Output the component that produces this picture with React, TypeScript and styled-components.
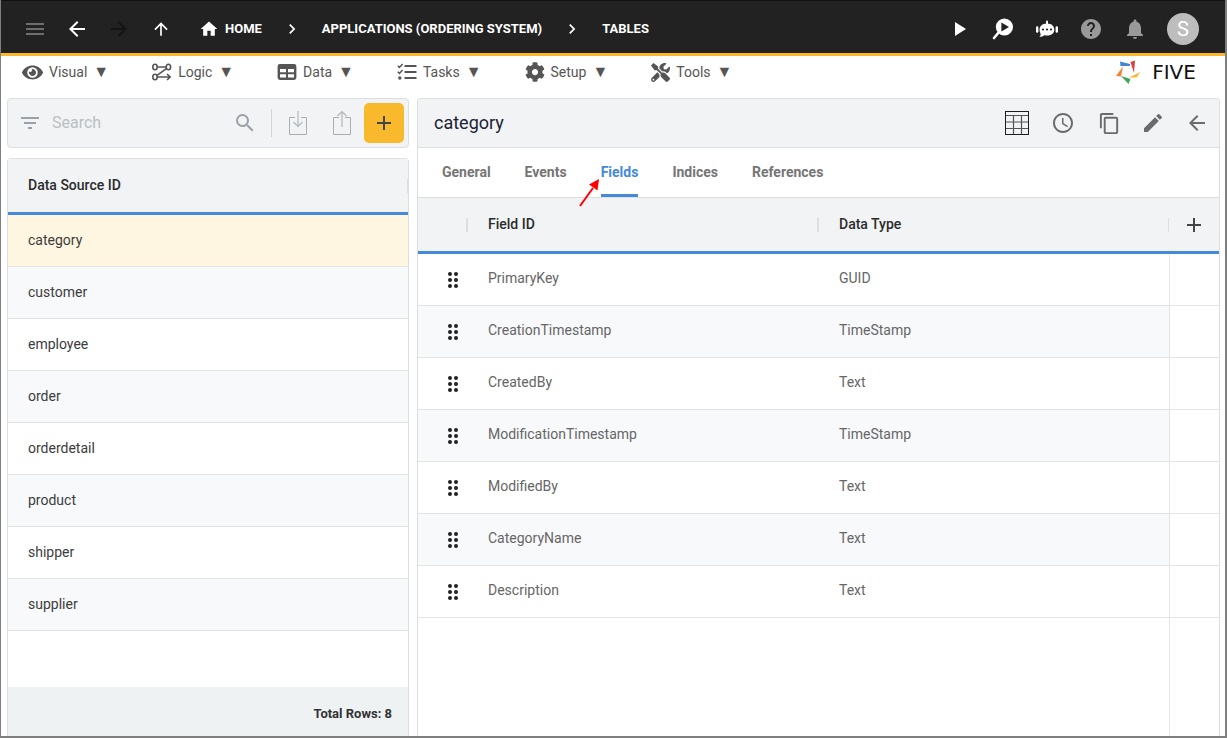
import React from "react";
import styled, { createGlobalStyle } from "styled-components";
import {
  MdMenu, MdArrowBack, MdArrowForward, MdArrowUpward, MdHome, MdChevronRight,
  MdPlayArrow, MdHelp, MdNotifications, MdFilterList, MdSearch,
  MdAdd, MdContentCopy, MdEdit, MdAccessTime,
} from "react-icons/md";
import { FaEye, FaTools, FaCog } from "react-icons/fa";

const GlobalStyle = createGlobalStyle`
  * { box-sizing: border-box; }
  body { margin: 0; background: #fff; font-family: Roboto, "Liberation Sans", sans-serif; font-size: 14px; color: #2b2b2b; }
  button { border: 0; padding: 0; background: none; font: inherit; color: inherit; }
`;

const Page = styled.div`
  display: flex;
  flex-direction: column;
  min-height: 100vh;
  border: solid #7f7f7f;
  border-width: 0 2px 2px 1px;
`;

const TopBar = styled.header`
  display: flex;
  align-items: center;
  height: 56px;
  padding: 3px 26px 0 22px;
  background: #222;
  border-top: 1px solid #111;
  border-bottom: 3px solid #fbb829;
  color: #fff;
`;

const IconButton = styled.button<{ $width?: number; $color?: string }>`
  display: flex;
  align-items: center;
  justify-content: center;
  flex: none;
  width: ${(p) => p.$width ?? 44}px;
  height: 40px;
  color: ${(p) => p.$color ?? "inherit"};
`;

const NavButtons = styled.div`
  display: flex;
  width: 176px;
  gap: 18px;
`;

const Crumbs = styled.nav`
  display: flex;
  align-items: center;
  flex: 1;
`;

const Crumb = styled.a`
  display: flex;
  align-items: center;
  gap: 6px;
  color: #fff;
  font-size: 13px;
  font-weight: 700;
  line-height: 20px;
  text-decoration: none;
  white-space: nowrap;
`;

const CrumbArrow = styled.span`
  display: flex;
  justify-content: center;
  width: 60px;
`;

const Actions = styled.div`
  display: flex;
  align-items: center;
`;

const Avatar = styled.button`
  width: 32px;
  height: 32px;
  margin-left: 10px;
  border-radius: 50%;
  background: #bdbdbd;
  color: #fff;
  font-size: 20px;
  line-height: 32px;
`;

const MenuBar = styled.nav`
  display: flex;
  align-items: center;
  gap: 43px;
  height: 42px;
  padding: 0 22px 10px 21px;
`;

const MenuButton = styled.button`
  display: flex;
  align-items: center;
  gap: 6px;
  color: #555;
  line-height: 20px;
`;

const Caret = styled.span`
  font-size: 16px;
`;

const Brand = styled.a`
  display: flex;
  align-items: center;
  gap: 4px;
  margin-left: auto;
  color: #111;
  font-family: "DejaVu Sans", sans-serif;
  font-size: 20px;
  line-height: 24px;
  text-decoration: none;
`;

const Wordmark = styled.span`
  min-width: 58px;
  text-align: center;
`;

const Main = styled.main`
  display: flex;
  flex: 1;
  gap: 8px;
  padding: 0 5px 0 6px;
`;

const ListColumn = styled.section`
  display: flex;
  flex-direction: column;
  flex: none;
  width: 402px;
  gap: 10px;
`;

const SearchBar = styled.form`
  display: flex;
  align-items: center;
  height: 50px;
  padding: 0 4px 0 10px;
  background: #f1f3f5;
  border: 1px solid #dcdee0;
  border-radius: 4px;
  color: #9aa1a8;
`;

const SearchInput = styled.input`
  flex: 1;
  min-width: 0;
  margin-left: 10px;
  padding: 0 0 2px;
  border: 0;
  outline: 0;
  background: none;
  font: inherit;
  font-size: 16px;
  &::placeholder { color: #bbbfc3; opacity: 1; }
`;

const Divider = styled.span`
  width: 1px;
  height: 28px;
  margin: 0 4px 0 6px;
  background: #d2d4d6;
`;

const AddButton = styled.button`
  display: flex;
  align-items: center;
  justify-content: center;
  width: 40px;
  height: 40px;
  border-radius: 5px;
  background: #f8b92c;
  color: #444;
`;

const Panel = styled.section`
  display: flex;
  flex-direction: column;
  flex: 1;
  min-width: 0;
  border: 1px solid #dcdee0;
  border-bottom: 0;
  border-radius: 4px 4px 0 0;
`;

const Table = styled.table`
  width: 100%;
  table-layout: fixed;
  border-collapse: separate;
  border-spacing: 0;
`;

const HeadCell = styled.th<{ $width?: number; $rule?: number }>`
  width: ${(p) => (p.$width ? `${p.$width}px` : "auto")};
  height: 56px;
  padding: 0 0 2px 20px;
  border-bottom: 3px solid #4589da;
  background: ${(p) =>
    p.$rule
      ? `linear-gradient(#dcdee0, #dcdee0) right center / ${p.$rule}px 14px no-repeat, #f1f3f5`
      : "#f1f3f5"};
  color: #2b2b2b;
  font-weight: 500;
  line-height: 20px;
  text-align: left;
`;

const Row = styled.tr<{ $selected?: boolean }>`
  background: ${(p) => (p.$selected ? "#fff6e2" : "#fff")};
  &:nth-child(even) { background: #f8f9fb; }
`;

const Cell = styled.td<{ $muted?: boolean }>`
  height: 52px;
  padding: 0 0 ${(p) => (p.$muted ? 4 : 2)}px 20px;
  border-bottom: 1px solid #e2e4e6;
  color: ${(p) => (p.$muted ? "#666" : "#3c3c3c")};
  line-height: 20px;
`;

const GripCell = styled(Cell)`
  padding: 0 0 0 30px;
  svg { display: block; }
`;

const EndCell = styled(Cell)`
  background: #fff;
  border-left: 1px solid #e2e4e6;
`;

const TailColumn = styled.div`
  flex: 1;
  margin-right: 49px;
  border-right: 1px solid #e2e4e6;
`;

const Footer = styled.footer`
  margin-top: auto;
  padding: 17px 16px 12px;
  background: #eef2f3;
  color: #333;
  font-size: 13px;
  font-weight: 700;
  line-height: 20px;
  text-align: right;
`;

const PanelHeader = styled.header`
  display: flex;
  align-items: center;
  height: 49px;
  padding-left: 16px;
  background: #f1f3f5;
  border-bottom: 1px solid #dcdee0;
  border-radius: 3px 3px 0 0;
  color: #6b6b6b;
`;

const Title = styled.h1`
  flex: 1;
  margin: 0;
  color: #1c2333;
  font-size: 18px;
  font-weight: 400;
  line-height: 24px;
`;

const Tabs = styled.div`
  display: flex;
  gap: 34px;
  height: 50px;
  padding-left: 24px;
  border-bottom: 1px solid #dcdee0;
`;

const Tab = styled.button<{ $active?: boolean }>`
  position: relative;
  padding-top: 1px;
  border-bottom: 3px solid ${(p) => (p.$active ? "#4589da" : "transparent")};
  color: ${(p) => (p.$active ? "#4589da" : "#757575")};
  font-weight: 700;
`;

const Pointer = styled.svg`
  position: absolute;
  top: 28px;
  left: -24px;
  z-index: 1;
`;

const PlusButton = styled.button`
  display: block;
  height: 24px;
  margin: 2px 0 0 -7px;
  color: #444;
`;

const LogicIcon = () => (
  <svg width="20" height="18" viewBox="0 0 20 18" fill="none" stroke="#555" strokeWidth="1.6">
    <ellipse cx="3" cy="4" rx="2.2" ry="2.8" />
    <ellipse cx="16.4" cy="4" rx="2.2" ry="2.8" />
    <ellipse cx="3" cy="14" rx="2.2" ry="2.8" />
    <path d="M5 4H14M14.4 5.6L5 12.4M5 14H18M15 11L18.2 14L15 17" />
  </svg>
);

const DataIcon = () => (
  <svg width="20" height="18" viewBox="0 0 20 18" fill="#555" fillRule="evenodd">
    <path d="M3 1H17A2.4 2.4 0 0 1 19.4 3.4V14.6A2.4 2.4 0 0 1 17 17H3A2.4 2.4 0 0 1 .6 14.6V3.4A2.4 2.4 0 0 1 3 1ZM3 6V9.2H9V6ZM11 6V9.2H17V6ZM3 11.2V14.6H9V11.2ZM11 11.2V14.6H17V11.2Z" />
  </svg>
);

const TasksIcon = () => (
  <svg width="20" height="18" viewBox="0 0 20 18" fill="none" stroke="#555">
    <path d="M7.500 3H19.500M7.500 9H19.500M7.500 15H19.500" strokeWidth="2" />
    <path d="M.8 2.800L2.400 4.400L5.600 1M.8 8.800L2.400 10.400L5.600 7" strokeWidth="1.500" />
    <circle cx="2.800" cy="15" r="1.700" fill="#555" stroke="none" />
  </svg>
);

const FindPlayIcon = () => (
  <svg width="22" height="22" viewBox="0 0 22 22">
    <path d="M7 14L2 20" stroke="#fff" strokeWidth="2.6" strokeLinecap="round" />
    <circle cx="12.4" cy="9" r="8.6" fill="#fff" />
    <path d="M9.400 4.600L17 9L9.400 13.400Z" fill="#222" />
  </svg>
);

const BotIcon = () => (
  <svg width="22" height="20" viewBox="0 0 22 20" fill="#fff">
    <rect x="10" y="1.500" width="2" height="4" rx="1" />
    <path d="M11 4.400C16 4.400 18.300 7.400 18.300 10.600C18.300 14 16 16.600 11 16.600C10 16.600 9 16.500 8.200 16.300C6.800 17.600 5 18 3.200 17.800C4.300 17 4.700 16 4.700 15C3.900 13.900 3.600 12.400 3.600 10.600C3.600 7.400 6 4.400 11 4.400Z" />
    <rect x="0" y="7.300" width="2.400" height="6.400" rx="1.200" />
    <rect x="19.600" y="7.300" width="2.400" height="6.400" rx="1.200" />
    <g fill="#222">
      <circle cx="7" cy="10.500" r="1.100" />
      <circle cx="11" cy="10.500" r="1.100" />
      <circle cx="15" cy="10.500" r="1.100" />
    </g>
  </svg>
);

const TransferIcon = ({ up }: { up?: boolean }) => (
  <svg width="20" height="26" viewBox="0 0 20 26" fill="none" stroke="#a9aeb3">
    <path d="M7 7.500H1.500V24.500H18.500V7.500H13" />
    <path d={up ? "M10 17V2M5.500 6L10 1.500L14.500 6" : "M10 1V16.500M5.500 12L10 16.500L14.500 12"} stroke="#b3b7bb" strokeWidth="1.200" />
  </svg>
);

const GridIcon = () => (
  <svg width="24" height="24" viewBox="0 0 24 24" fill="none">
    <path d="M1 4.500H23M8.500 4V23M16.500 4V23M1 11H23M1 17.500H23" stroke="#555" strokeWidth="1.200" />
    <rect x=".5" y=".5" width="23" height="23" stroke="#1c1c22" />
  </svg>
);

const GripIcon = () => (
  <svg width="12" height="18" viewBox="0 0 12 18" fill="#222">
    {[3, 9, 15].map((y) => (
      <React.Fragment key={y}>
        <circle cx="2" cy={y} r="2" />
        <circle cx="8" cy={y} r="2" />
      </React.Fragment>
    ))}
  </svg>
);

const BrandMark = () => (
  <svg width="25" height="24" viewBox="0 0 25 24">
    <path d="M4 1.500L14 4V6H4.500Z" fill="#3f86d8" />
    <path d="M14.500 2L19 .5L18 13Z" fill="#e23b3b" />
    <path d="M24.500 12L20.500 17.500L13 17.500Z" fill="#f8b92c" />
    <path d="M5 16L14.500 19L12.500 24Z" fill="#3fa65a" />
    <path d="M7 6.500L5 16.500L0 16Z" fill="#f58233" />
  </svg>
);

const menus = [
  { label: "Visual", icon: <FaEye size={21} /> },
  { label: "Logic", icon: <LogicIcon /> },
  { label: "Data", icon: <DataIcon /> },
  { label: "Tasks", icon: <TasksIcon /> },
  { label: "Setup", icon: <FaCog size={20} /> },
  { label: "Tools", icon: <FaTools size={19} /> },
];

const sources = ["category", "customer", "employee", "order", "orderdetail", "product", "shipper", "supplier"];

const fields = [
  ["PrimaryKey", "GUID"],
  ["CreationTimestamp", "TimeStamp"],
  ["CreatedBy", "Text"],
  ["ModificationTimestamp", "TimeStamp"],
  ["ModifiedBy", "Text"],
  ["CategoryName", "Text"],
  ["Description", "Text"],
];

const tabs = ["General", "Events", "Fields", "Indices", "References"];

export default function App() {
  return (
    <Page>
      <GlobalStyle />
      <TopBar>
        <NavButtons>
          <IconButton $width={24} $color="#6e6e6e" aria-label="Menu"><MdMenu size={24} /></IconButton>
          <IconButton $width={24} aria-label="Back"><MdArrowBack size={24} /></IconButton>
          <IconButton $width={24} $color="#141414" aria-label="Forward"><MdArrowForward size={24} /></IconButton>
          <IconButton $width={24} aria-label="Up"><MdArrowUpward size={20} /></IconButton>
        </NavButtons>
        <Crumbs aria-label="Breadcrumb">
          <Crumb href="#home"><MdHome size={20} />HOME</Crumb>
          <CrumbArrow><MdChevronRight size={20} /></CrumbArrow>
          <Crumb href="#applications">APPLICATIONS (ORDERING SYSTEM)</Crumb>
          <CrumbArrow><MdChevronRight size={20} /></CrumbArrow>
          <Crumb href="#tables">TABLES</Crumb>
        </Crumbs>
        <Actions>
          <IconButton aria-label="Run"><MdPlayArrow size={24} /></IconButton>
          <IconButton aria-label="Inspect"><FindPlayIcon /></IconButton>
          <IconButton aria-label="Assistant"><BotIcon /></IconButton>
          <IconButton $color="#999" aria-label="Help"><MdHelp size={24} /></IconButton>
          <IconButton $color="#999" aria-label="Notifications"><MdNotifications size={24} /></IconButton>
          <Avatar>S</Avatar>
        </Actions>
      </TopBar>
      <MenuBar aria-label="Main">
        {menus.map((m) => (
          <MenuButton key={m.label}>{m.icon}{m.label}<Caret>▼</Caret></MenuButton>
        ))}
        <Brand href="#five"><BrandMark /><Wordmark>FIVE</Wordmark></Brand>
      </MenuBar>
      <Main>
        <ListColumn>
          <SearchBar>
            <MdFilterList size={24} />
            <SearchInput placeholder="Search" aria-label="Search" />
            <IconButton $width={40} type="button" aria-label="Find"><MdSearch size={24} /></IconButton>
            <Divider />
            <IconButton type="button" aria-label="Import"><TransferIcon /></IconButton>
            <IconButton type="button" aria-label="Export"><TransferIcon up /></IconButton>
            <AddButton type="button" aria-label="Add"><MdAdd size={24} /></AddButton>
          </SearchBar>
          <Panel>
            <Table>
              <thead><tr><HeadCell $rule={1}>Data Source ID</HeadCell></tr></thead>
              <tbody>
                {sources.map((s, i) => (
                  <Row key={s} $selected={i === 0}><Cell>{s}</Cell></Row>
                ))}
              </tbody>
            </Table>
            <Footer>Total Rows: 8</Footer>
          </Panel>
        </ListColumn>
        <Panel>
          <PanelHeader>
            <Title>category</Title>
            <IconButton aria-label="Data view"><GridIcon /></IconButton>
            <IconButton $width={48} aria-label="History"><MdAccessTime size={24} /></IconButton>
            <IconButton aria-label="Copy"><MdContentCopy size={23} /></IconButton>
            <IconButton aria-label="Edit"><MdEdit size={24} /></IconButton>
            <IconButton aria-label="Close"><MdArrowBack size={24} /></IconButton>
          </PanelHeader>
          <Tabs role="tablist">
            {tabs.map((t) => (
              <Tab key={t} role="tab" aria-selected={t === "Fields"} $active={t === "Fields"}>
                {t}
                {t === "Fields" && (
                  <Pointer width="26" height="34" viewBox="0 0 26 34">
                    <path d="M3 30L16 12" stroke="#f00" strokeWidth="2" />
                    <path d="M22 3L20.500 14.500L12 8.500Z" fill="#f00" />
                  </Pointer>
                )}
              </Tab>
            ))}
          </Tabs>
          <Table>
            <thead>
              <tr>
                <HeadCell $width={50} $rule={2} aria-label="Order" />
                <HeadCell $width={351} $rule={2}>Field ID</HeadCell>
                <HeadCell $rule={1}>Data Type</HeadCell>
                <HeadCell $width={50}>
                  <PlusButton aria-label="Add field"><MdAdd size={24} /></PlusButton>
                </HeadCell>
              </tr>
            </thead>
            <tbody>
              {fields.map(([id, type]) => (
                <Row key={id}>
                  <GripCell><GripIcon /></GripCell>
                  <Cell $muted>{id}</Cell>
                  <Cell $muted>{type}</Cell>
                  <EndCell />
                </Row>
              ))}
            </tbody>
          </Table>
          <TailColumn />
        </Panel>
      </Main>
    </Page>
  );
}
